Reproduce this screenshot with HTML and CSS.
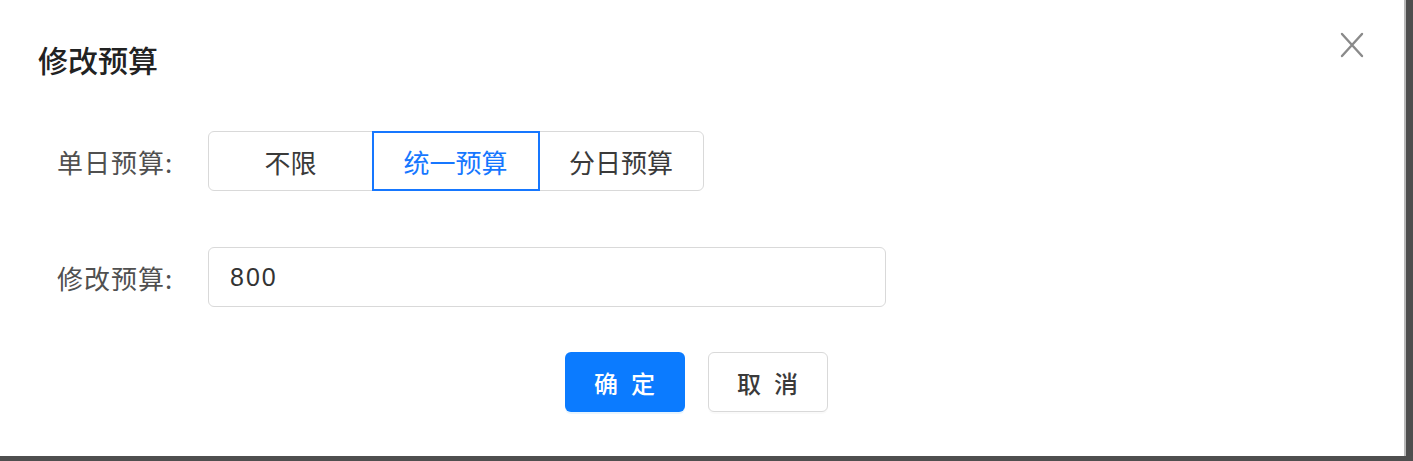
FILE: index.html
```html
<!DOCTYPE html>
<html lang="zh-CN">
<head>
<meta charset="utf-8">
<title>修改预算</title>
<link rel="stylesheet" href="styles.css">
</head>
<body>
<div class="screen">
  <div class="modal">
    <div class="modal-header">
      <div class="modal-title">修改预算</div>
      <button class="modal-close" aria-label="关闭">
        <svg width="24" height="26" viewBox="0 0 24 26"><path d="M2 2 L22 24 M22 2 L2 24" stroke="#8a8a8a" stroke-width="2.4" fill="none" stroke-linecap="round"/></svg>
      </button>
    </div>
    <div class="form">
      <div class="form-row row-first">
        <div class="form-label">单日预算:</div>
        <div class="segmented">
          <div class="seg-item seg-first">不限</div>
          <div class="seg-item seg-active">统一预算</div>
          <div class="seg-item seg-last">分日预算</div>
        </div>
      </div>
      <div class="form-row row-second">
        <div class="form-label">修改预算:</div>
        <div class="input">800</div>
      </div>
      <div class="footer">
        <button class="btn btn-primary"><span>确定</span></button>
        <button class="btn btn-default"><span>取消</span></button>
      </div>
    </div>
  </div>
  <div class="backdrop-strip"></div>
</div>
</body>
</html>
```

FILE: styles.css
```css
html, body {
  margin: 0;
  padding: 0;
  background: #4e4e4e;
}
body {
  font-family: "Liberation Sans", "Noto Sans CJK SC", sans-serif;
  width: 1413px;
  height: 461px;
  overflow: hidden;
}
.screen {
  display: flex;
  flex-direction: column;
  width: 1413px;
  height: 461px;
}
.modal {
  width: 1406px;
  height: 456px;
  background: #ffffff;
  box-sizing: border-box;
  border-right: 2px solid #b8b8b8;
  flex: none;
}
.backdrop-strip {
  flex: 1;
  background: #4f4f4f;
}
.modal-header {
  display: flex;
  justify-content: space-between;
  align-items: flex-start;
  padding: 38px 40px 0 38px;
  height: 131px;
  box-sizing: border-box;
}
.modal-title {
  font-family: "Noto Sans CJK SC", sans-serif;
  font-size: 30px;
  line-height: 42px;
  font-weight: 500;
  color: #222222;
}
.modal-close {
  margin-top: -6px;
  padding: 0;
  border: none;
  background: none;
  width: 24px;
  height: 26px;
  display: flex;
}
.form {
  display: flex;
  flex-direction: column;
}
.form-row {
  display: flex;
  align-items: center;
  height: 60px;
}
.row-first {
  margin-bottom: 56px;
}
.row-second {
  margin-bottom: 45px;
}
.form-label {
  width: 208px;
  padding-left: 57px;
  box-sizing: border-box;
  font-size: 26px;
  color: #505050;
  font-family: "Noto Sans CJK SC", sans-serif;
  letter-spacing: 1px;
}
.segmented {
  display: flex;
  height: 60px;
}
.seg-item {
  width: 166px;
  height: 60px;
  box-sizing: border-box;
  border: 1.5px solid #d9d9d9;
  margin-left: -1.5px;
  display: flex;
  align-items: center;
  justify-content: center;
  font-family: "Noto Sans CJK SC", sans-serif;
  font-size: 26px;
  color: #3a3a3a;
}
.seg-first {
  margin-left: 0;
  width: 165px;
  border-radius: 6px 0 0 6px;
}
.seg-last {
  border-radius: 0 6px 6px 0;
}
.seg-active {
  width: 168px;
  border: 2px solid #1677ff;
  color: #1677ff;
  position: relative;
  z-index: 1;
}
.input {
  width: 678px;
  height: 60px;
  box-sizing: border-box;
  border: 1.5px solid #d9d9d9;
  border-radius: 6px;
  padding-left: 21px;
  display: flex;
  align-items: center;
  font-size: 25px;
  letter-spacing: 2px;
  color: #333333;
}
.footer {
  display: flex;
  justify-content: center;
  gap: 23px;
  padding-right: 12px;
}
.btn {
  width: 120px;
  height: 60px;
  border-radius: 6px;
  box-sizing: border-box;
  font-family: "Noto Sans CJK SC", sans-serif;
  font-size: 24px;
  display: flex;
  align-items: center;
  justify-content: center;
  padding: 0;
  cursor: pointer;
}
.btn span {
  letter-spacing: 13px;
  padding-left: 13px;
}
.btn-primary {
  background: #0b7bff;
  border: none;
  color: #ffffff;
  font-weight: 500;
  box-shadow: 0 2px 0 rgba(5, 145, 255, 0.1);
}
.btn-default {
  background: #ffffff;
  border: 1.5px solid #d9d9d9;
  color: #3a3a3a;
  font-weight: 500;
  box-shadow: 0 2px 0 rgba(0, 0, 0, 0.02);
}
```
